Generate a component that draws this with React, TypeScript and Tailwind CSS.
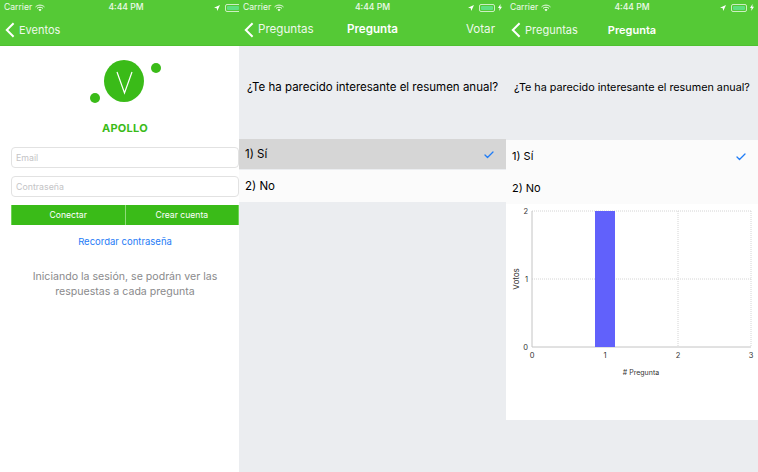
import React from "react";
import { Check } from "lucide-react";

const font = { fontFamily: '"Inter", "Liberation Sans", sans-serif' };

// status bar shared by the three phones
const StatusBar = () => (
    <div className="flex items-center justify-between h-[15px] pl-[4px] pr-[4px] text-[8.6px] leading-none text-white/90">
        <div className="flex items-center gap-[3px] w-[70px]">
            <span>Carrier</span>
            <svg width="10" height="8" viewBox="0 0 11 8" fill="none" stroke="white" strokeWidth="1">
                <path d="M0.6 2.8C3.4 0.2 7.6 0.2 10.4 2.8" />
                <path d="M2.2 4.4C4 2.8 7 2.8 8.8 4.4" />
                <path d="M5.5 7.6L3.8 5.8C4.8 5 6.2 5 7.2 5.8Z" fill="white" stroke="none" />
            </svg>
        </div>
        <span className="font-medium">4:44 PM</span>
        <div className="flex items-center justify-end gap-[3px] w-[70px]">
            <svg width="6" height="6" viewBox="0 0 7 7" fill="white" className="mr-[2px]">
                <path d="M7 0L0 3.2L3.2 3.8L3.8 7Z" />
            </svg>
            <div className="flex items-center h-[8px] w-[16px] rounded-[2px] border border-white/70 p-[1px]">
                <div className="h-full w-full rounded-[1px] bg-[#5ee07f]" />
            </div>
            <svg width="4" height="7" viewBox="0 0 4 7" fill="white">
                <path d="M2.6 0L0 4H1.6L1.2 7L4 2.8H2.3Z" />
            </svg>
        </div>
    </div>
);

const NavBar = ({ back, title, action, textSize }: { back: string; title?: string; action?: string; textSize: string }) => (
    <div className={`flex items-center justify-between h-[30px] text-white ${textSize}`}>
        <div className="flex items-center w-[90px] shrink-0 pl-[5px]">
            <svg width="10" height="16" viewBox="0 0 10 16" fill="none" stroke="white" strokeWidth="2" className="mr-[4px] shrink-0">
                <path d="M8.6 1.2L1.8 8L8.6 14.8" />
            </svg>
            <span className="opacity-90">{back}</span>
        </div>
        {title && <span className="font-semibold">{title}</span>}
        <span className="w-[90px] shrink-0 text-right pr-[11px] opacity-90">{action}</span>
    </div>
);

const Header = (props: { back: string; title?: string; action?: string; textSize: string; clipped?: boolean }) => (
    <div className="bg-[#55c936] h-[46px] shrink-0 border-b border-[#4fc030] overflow-hidden">
        {/* first phone is cut off on the right, its bar stays full width */}
        <div className={props.clipped ? "w-[252px]" : "w-full"}>
            <StatusBar />
        </div>
        <NavBar back={props.back} title={props.title} action={props.action} textSize={props.textSize} />
    </div>
);

const Question = ({ className }: { className: string }) => (
    <div className={`flex items-center justify-center pb-[10px] whitespace-nowrap text-black ${className}`}>
        ¿Te ha parecido interesante el resumen anual?
    </div>
);

const Row = ({ label, checked, className }: { label: string; checked?: boolean; className: string }) => (
    <div className={`flex items-center justify-between pl-[6px] pr-[11px] text-black ${className}`}>
        <span>{label}</span>
        {checked && <Check className="w-[12px] h-[12px] text-[#1f7cf6]" strokeWidth={2.6} />}
    </div>
);

const Logo = () => (
    <svg width="71" height="46" viewBox="0 0 71 46" className="block">
        <ellipse cx="34" cy="23" rx="20" ry="21" fill="#3abb18" />
        <circle cx="66" cy="10" r="5" fill="#3abb18" />
        <circle cx="5" cy="40" r="5" fill="#3abb18" />
        <path d="M27 14L34.5 35L42 14" fill="none" stroke="white" strokeWidth="1.2" />
    </svg>
);

const Field = ({ placeholder }: { placeholder: string }) => (
    <div className="flex items-center h-[21px] pl-[4px] rounded-[4px] border border-[#e2e2e2] text-[8.8px] text-[#c4c4c6]">
        {placeholder}
    </div>
);

const Chart = () => {
    const left = 26;
    const right = 245;
    const top = 7;
    const bottom = 143;
    const xs = [0, 1, 2, 3];
    const ys = [0, 1, 2];
    const xAt = (v: number) => left + ((right - left) * v) / 3;
    const yAt = (v: number) => bottom - ((bottom - top) * v) / 2;

    return (
        <svg width="252" height="216" viewBox="0 0 252 216" className="block" fontSize="7.5" fill="#333">
            {xs.slice(1).map((v) => (
                <line key={v} x1={xAt(v)} x2={xAt(v)} y1={top} y2={bottom} stroke="#d4d4d4" strokeDasharray="1 1" />
            ))}
            {ys.slice(1).map((v) => (
                <line key={v} x1={left} x2={right} y1={yAt(v)} y2={yAt(v)} stroke="#d4d4d4" strokeDasharray="1 1" />
            ))}
            <line x1={left} x2={left} y1={top} y2={bottom} stroke="#c4c4c4" />
            <line x1={left} x2={right} y1={bottom} y2={bottom} stroke="#c4c4c4" />
            <rect x={xAt(1) - 10} y={top} width="20" height={bottom - top} fill="#6161fb" />
            {xs.map((v) => (
                <text key={v} x={xAt(v)} y={bottom + 11} textAnchor="middle">
                    {v}
                </text>
            ))}
            {ys.map((v) => (
                <text key={v} x={left - 4} y={yAt(v) + 3} textAnchor="end">
                    {v}
                </text>
            ))}
            <text x="135" y="171" textAnchor="middle" fontSize="7">
                # Pregunta
            </text>
            <text transform="translate(13 75) rotate(-90)" textAnchor="middle" fontSize="8">
                Votos
            </text>
        </svg>
    );
};

export default function App() {
    return (
        <div className="flex w-[758px] h-[472px] overflow-hidden bg-white" style={font}>
            {/* LOGIN */}
            <div className="flex flex-col w-[239px] shrink-0 bg-white">
                <Header back="Eventos" textSize="text-[11px]" clipped />
                <div className="flex flex-col flex-1 pt-[12px] pl-[11px]">
                    <div className="flex justify-center">
                        <Logo />
                    </div>
                    <div className="mt-[17px] text-center text-[11px] leading-[14px] font-bold tracking-[0.3px] text-[#3abb18]">
                        APOLLO
                    </div>
                    <div className="flex flex-col gap-[8px] mt-[12px]">
                        <Field placeholder="Email" />
                        <Field placeholder="Contraseña" />
                    </div>
                    <div className="flex mt-[8px] h-[20px] text-[8.6px] text-white bg-[#3abb18] border-x border-[#6fd455]">
                        <div className="flex flex-1 items-center justify-center border-r border-[#8fdc7a]">Conectar</div>
                        <div className="flex flex-1 items-center justify-center">Crear cuenta</div>
                    </div>
                    <div className="mt-[11px] text-center text-[9.5px] leading-[12px] text-[#1f7cf6]">
                        Recordar contraseña
                    </div>
                    <div className="mt-[21px] text-center text-[10.6px] leading-[15px] text-[#8a8a8c]">
                        Iniciando la sesión, se podrán ver las
                        <br />
                        respuestas a cada pregunta
                    </div>
                </div>
            </div>

            {/* VOTE */}
            <div className="flex flex-col w-[267px] shrink-0 bg-[#ebedf0]">
                <Header back="Preguntas" title="Pregunta" action="Votar" textSize="text-[11.6px]" />
                <Question className="h-[93px] text-[11.5px]" />
                <Row label="1) Sí" checked className="h-[30px] pt-[2px] text-[11.5px] bg-[#d6d6d6]" />
                <Row label="2) No" className="h-[32px] mt-[1px] pt-[1px] text-[11.5px] bg-[#fbfbfb]" />
            </div>

            {/* RESULTS */}
            <div className="flex flex-col flex-1 bg-[#ebedf0]">
                <Header back="Preguntas" title="Pregunta" textSize="text-[11px]" />
                <Question className="h-[94px] text-[10.8px]" />
                <Row label="1) Sí" checked className="h-[32px] pt-[1px] text-[11px] bg-[#fbfbfb]" />
                <Row label="2) No" className="h-[32px] text-[11px] bg-[#fbfbfb]" />
                <div className="bg-white">
                    <Chart />
                </div>
            </div>
        </div>
    );
}
